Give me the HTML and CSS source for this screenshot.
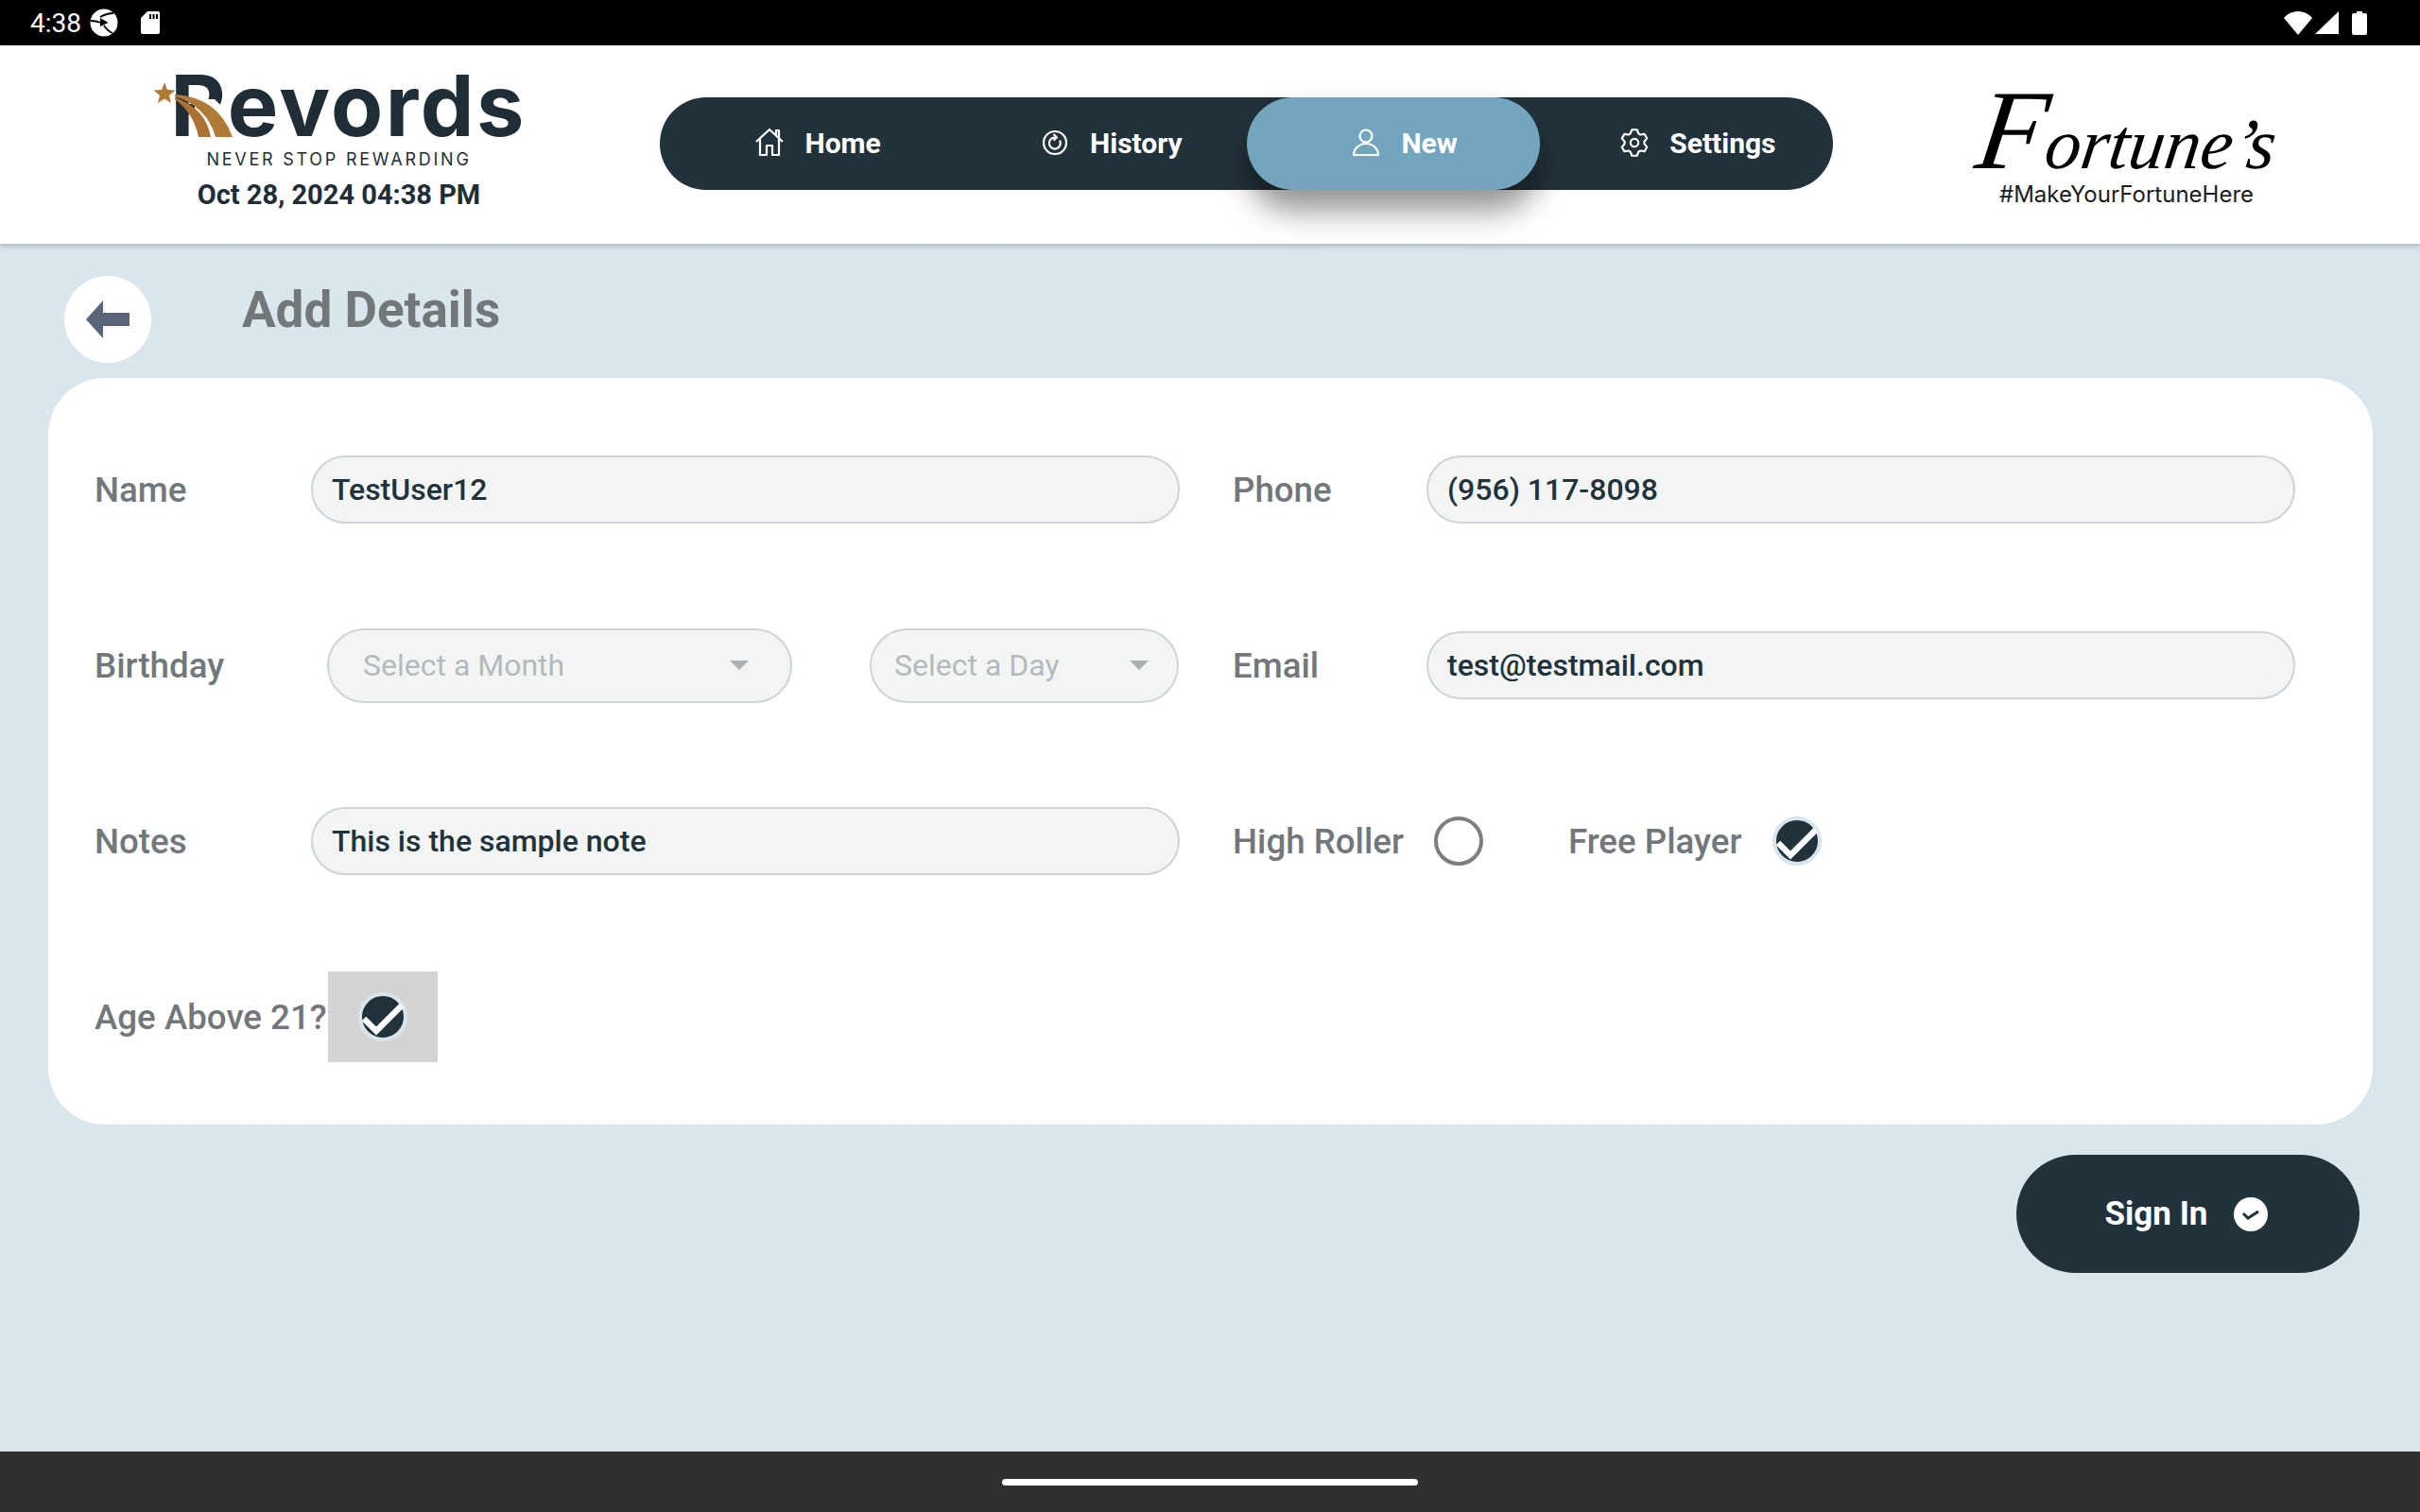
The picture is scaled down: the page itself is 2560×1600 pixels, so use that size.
FILE: index.html
```html
<!DOCTYPE html>
<html lang="en">
<head>
  <meta charset="UTF-8" />
  <meta name="viewport" content="width=device-width, initial-scale=1.0" />
  <title>Add Details</title>
  <link rel="stylesheet" href="styles.css">
</head>
<body>
  <div class="statusbar">
    <div class="status-left">
      <span class="clock">4:38</span>
      <svg class="status-sync" viewBox="0 0 30 30">
        <circle cx="15" cy="15" r="14.500" fill="#fff"/>
        <path d="M11 10 19.500 15 11 19Z" fill="#000"/>
        <path d="M11 9Q18 5 25 5M12 15Q6 13 1 13M15 18Q19 24 24 26" fill="none" stroke="#000" stroke-width="1.800"/>
      </svg>
      <svg class="status-sd" viewBox="0 0 20 24">
        <path d="M7 0H18a2 2 0 0 1 2 2V22a2 2 0 0 1-2 2H2a2 2 0 0 1-2-2V7Z" fill="#fff"/>
        <path d="M9 3h2v5H9zM12.500 3h2v5h-2zM16 3h2v5h-2z" fill="#000"/>
      </svg>
    </div>
    <div class="status-right">
      <svg class="status-wifi" viewBox="0 0 30 25"><path d="M15 25 0 7Q6 0 15 0T30 7Z" fill="#fff"/></svg>
      <svg class="status-signal" viewBox="0 0 25 24"><path d="M25 0V24H0Z" fill="#fff"/></svg>
      <svg class="status-battery" viewBox="0 0 16 25"><path d="M5 0h6v2h3a2 2 0 0 1 2 2V23a2 2 0 0 1-2 2H2a2 2 0 0 1-2-2V4a2 2 0 0 1 2-2h3Z" fill="#fff"/></svg>
    </div>
  </div>

  <header class="topbar">
    <div class="brand">
      <div class="brand-logo">
        <span class="brand-name">Revords</span>
        <svg class="brand-mark" viewBox="0 0 90 75">
          <path d="M11 12 14 20 22.500 20.500 16 26 18 34 11 29.500 4 34 6 26 -.500 20.500 8 20Z" fill="#b07a38"/>
          <path d="M43 30H64Q80 44 88 72H43Z" fill="#fff"/>
          <path d="M22 25Q68 28 83 70H65Q56 38 22 27Z" fill="#b07a38"/>
          <path d="M22 28Q55 40 60 70H47Q42 45 22 30Z" fill="#ab7233"/>
        </svg>
      </div>
      <div class="brand-tag">NEVER STOP REWARDING</div>
      <div class="brand-date">Oct 28, 2024 04:38 PM</div>
    </div>

    <nav class="nav">
      <a class="nav-item">
        <svg class="nav-icon" viewBox="0 0 30 30"><path d="M1 14 15 1 29 14M5 11V28H12V18H18V28H25V11M22 7V2H25V10" /></svg>
        Home
      </a>
      <a class="nav-item">
        <svg class="nav-icon" viewBox="0 0 30 30"><circle cx="15" cy="15" r="12"/><path d="M20 12.500A6 6 0 1 1 15 9.500M13.500 6 17 9.500 13.500 12.500"/></svg>
        History
      </a>
      <a class="nav-item active">
        <svg class="nav-icon" viewBox="0 0 30 30"><circle cx="15" cy="8" r="6.500"/><path d="M2 28A13 12 0 0 1 28 28Z"/></svg>
        New
      </a>
      <a class="nav-item">
        <svg class="nav-icon" viewBox="0 0 30 30"><circle cx="15" cy="15" r="4.200"/><path d="M10.700 5.400 12.300 1.250H17.700L19.300 5.400 21.200 6.500 25.600 5.800 28.200 10.400 25.400 13.900V16.100L28.200 19.600 25.600 24.200 21.200 23.500 19.300 24.600 17.700 28.750H12.300L10.700 24.600 8.800 23.500 4.400 24.200 1.800 19.600 4.600 16.100V13.900L1.800 10.400 4.400 5.800 8.800 6.500Z"/></svg>
        Settings
      </a>
    </nav>

    <div class="venue">
      <div class="venue-name"><span class="venue-initial">F</span>ortune’s</div>
      <div class="venue-tag">#MakeYourFortuneHere</div>
    </div>
  </header>

  <main class="page">
    <div class="page-head">
      <button class="back-btn">
        <svg class="back-icon" viewBox="0 0 46 40"><path d="M18 0V13H46V27H18V40L0 20Z"/></svg>
      </button>
      <h1 class="page-title">Add Details</h1>
    </div>

    <section class="card">
      <div class="row">
        <label class="label label-name">Name</label>
        <div class="field">TestUser12</div>
      </div>
      <div class="row">
        <label class="label label-phone">Phone</label>
        <div class="field">(956) 117-8098</div>
      </div>

      <div class="row">
        <label class="label label-birthday">Birthday</label>
        <div class="select select-month">Select a Month<span class="caret"></span></div>
        <div class="select select-day">Select a Day<span class="caret"></span></div>
      </div>
      <div class="row">
        <label class="label label-phone">Email</label>
        <div class="field">test@testmail.com</div>
      </div>

      <div class="row">
        <label class="label label-name">Notes</label>
        <div class="field">This is the sample note</div>
      </div>
      <div class="row">
        <label class="label label-roller">High Roller</label>
        <span class="radio"></span>
        <label class="label label-free">Free Player</label>
        <svg class="check" viewBox="0 0 52 52">
          <circle cx="26" cy="26" r="24" fill="#22323b" stroke="#d8e5ec" stroke-width="4"/>
          <path d="M6 28 19 41 46 14" fill="none" stroke="#fff" stroke-width="6.500"/>
        </svg>
      </div>

      <div class="row">
        <label class="label label-age">Age Above 21?</label>
        <div class="check-focus">
          <svg class="check" viewBox="0 0 52 52">
            <circle cx="26" cy="26" r="24" fill="#22323b" stroke="#d8e5ec" stroke-width="4"/>
            <path d="M6 28 19 41 46 14" fill="none" stroke="#fff" stroke-width="6.500"/>
          </svg>
        </div>
      </div>
    </section>

    <div class="actions">
      <button class="signin-btn">
        Sign In
        <svg class="signin-icon" viewBox="0 0 36 36">
          <circle cx="18" cy="18" r="18" fill="#fff"/>
          <path d="M10 17 15 22 26 15" fill="none" stroke="#22323b" stroke-width="3"/>
        </svg>
      </button>
    </div>
  </main>

  <footer class="navbar">
    <div class="home-bar"></div>
  </footer>
</body>
</html>
```

FILE: styles.css
```css
html, body {
  margin: 0;
  padding: 0;
  width: 100%;
  height: 100%;
  overflow: hidden;
  font-family: "Roboto", "Liberation Sans", sans-serif;
  background-color: #d9e6ec;
}

body {
  display: flex;
  flex-direction: column;
}

/* android status bar */
.statusbar {
  flex: 0 0 48px;
  display: flex;
  justify-content: space-between;
  align-items: center;
  padding: 0 56px 0 32px;
  background-color: #000;
  color: #fff;
}

.status-left, .status-right {
  display: flex;
  align-items: center;
}

.clock {
  font-size: 28px;
  width: 63px;
}

.status-sync {
  width: 30px;
  height: 30px;
}

.status-sd {
  width: 20px;
  height: 24px;
  margin-left: 24px;
}

.status-wifi {
  width: 30px;
  height: 25px;
}

.status-signal {
  width: 25px;
  height: 24px;
  margin-left: 3px;
}

.status-battery {
  width: 16px;
  height: 25px;
  margin-left: 14px;
}

/* header */
.topbar {
  flex: 0 0 210px;
  position: relative;
  z-index: 2;
  display: flex;
  align-items: flex-start;
  background-color: #fff;
  box-shadow: 0 2px 6px rgba(60, 80, 95, 0.35);
}

.brand {
  flex: 0 0 698px;
  display: flex;
  flex-direction: column;
  align-items: center;
  box-sizing: border-box;
  padding: 16px 0 0 19px;
  color: #1f2d36;
}

.brand-logo {
  position: relative;
  height: 95px;
  margin-left: 20px;
}

.brand-name {
  display: block;
  font-family: "Inter", "Liberation Sans", sans-serif;
  font-weight: 700;
  font-size: 90px;
  line-height: 95px;
  letter-spacing: 2.5px;
}

.brand-mark {
  position: absolute;
  left: -17px;
  top: 11px;
  width: 90px;
  height: 75px;
}

.brand-tag {
  font-family: "Inter", "Liberation Sans", sans-serif;
  font-size: 18px;
  line-height: 20px;
  letter-spacing: 2.75px;
}

.brand-date {
  font-size: 29px;
  font-weight: 700;
  line-height: 36px;
  margin-top: 9px;
}

.nav {
  margin-top: 55px;
  flex: 0 0 1241px;
  height: 98px;
  display: flex;
  border-radius: 49px;
  background-color: #22323b;
}

.nav-item {
  flex: 1;
  display: flex;
  align-items: center;
  justify-content: center;
  gap: 22px;
  padding: 0 1px 2px 26px;
  box-sizing: border-box;
  border-radius: 49px;
  color: #fff;
  font-size: 30px;
  font-weight: 700;
}

.nav-item.active {
  background-color: #73a5bf;
  box-shadow: 0 22px 32px rgba(0, 0, 0, 0.42);
}

.nav-icon {
  width: 30px;
  height: 30px;
  fill: none;
  stroke: #fff;
  stroke-width: 2.2;
  stroke-linejoin: round;
}

.venue {
  flex: 1;
  display: flex;
  flex-direction: column;
  align-items: center;
  padding-top: 64px;
  color: #000;
}

.venue-name {
  font-family: "Liberation Serif", serif;
  font-style: italic;
  font-size: 76px;
  line-height: 80px;
  white-space: nowrap;
  transform: skewX(-8deg);
}

.venue-initial {
  font-size: 120px;
  line-height: 0;
}

.venue-tag {
  font-family: "Inter", "Liberation Sans", sans-serif;
  font-size: 24px;
  line-height: 28px;
  color: #1c1c1c;
}

/* page */
.page {
  flex: 1;
  padding: 34px 50px 0 51px;
}

.page-head {
  display: flex;
  align-items: flex-start;
  height: 108px;
  padding-left: 17px;
}

.back-btn {
  width: 92px;
  height: 92px;
  border: none;
  border-radius: 50%;
  background-color: #fff;
  display: flex;
  align-items: center;
  justify-content: center;
  padding: 0;
}

.back-icon {
  width: 46px;
  height: 40px;
  fill: #5a6578;
}

.page-title {
  margin: 0 0 0 96px;
  font-size: 53px;
  font-weight: 700;
  line-height: 72px;
  color: #72777a;
}

.card {
  display: grid;
  grid-template-columns: 1148px 1124px;
  grid-auto-rows: 72px;
  column-gap: 56px;
  row-gap: 114px;
  padding: 82px 80px 78px 49px;
  border-radius: 60px;
  background-color: #fff;
}

.row {
  display: flex;
  align-items: center;
}

.label {
  font-size: 36.7px;
  font-weight: 500;
  color: #72777a;
  white-space: nowrap;
}

.label-name {
  flex: 0 0 229px;
}

.label-phone {
  flex: 0 0 205px;
}

.label-birthday {
  flex: 0 0 246px;
}

.label-roller {
  flex: 0 0 213px;
}

.label-free {
  flex: 0 0 216px;
  margin-left: 90px;
}

.label-age {
  flex: 0 0 247px;
}

.field {
  flex: 1;
  height: 72px;
  display: flex;
  align-items: center;
  padding-left: 20px;
  box-sizing: border-box;
  border: 2px solid #cdd3d8;
  border-radius: 36px;
  background-color: #f3f5f5;
  font-size: 32px;
  font-weight: 500;
  color: #22323b;
}

.select {
  height: 79px;
  flex: none;
  display: flex;
  align-items: center;
  justify-content: space-between;
  box-sizing: border-box;
  border: 2px solid #cdd3d8;
  border-radius: 40px;
  background-color: #f3f5f5;
  font-size: 32px;
  color: #b4babc;
}

.select-month {
  width: 492px;
  padding: 0 44px 0 36px;
}

.select-day {
  width: 327px;
  margin-left: 82px;
  padding: 0 30px 0 24px;
}

.caret {
  width: 0;
  height: 0;
  border-left: 10px solid transparent;
  border-right: 10px solid transparent;
  border-top: 10px solid #aab0b3;
}

.radio {
  width: 52px;
  height: 52px;
  box-sizing: border-box;
  border: 4px solid #7c7f80;
  border-radius: 50%;
}

.check {
  width: 52px;
  height: 52px;
  flex: none;
}

.check-focus {
  width: 116px;
  height: 96px;
  flex: none;
  display: flex;
  align-items: center;
  justify-content: center;
  background-color: #d4d4d4;
}

.actions {
  display: flex;
  justify-content: flex-end;
  padding: 32px 14px 0 0;
}

.signin-btn {
  width: 363px;
  height: 125px;
  border: none;
  border-radius: 63px;
  padding: 0 3px 0 0;
  display: flex;
  align-items: center;
  justify-content: center;
  gap: 28px;
  background-color: #22323b;
  color: #fff;
  font-family: inherit;
  font-size: 35px;
  font-weight: 700;
}

.signin-icon {
  width: 36px;
  height: 36px;
}

/* android nav bar */
.navbar {
  flex: 0 0 64px;
  display: flex;
  justify-content: center;
  align-items: center;
  background-color: #303030;
}

.home-bar {
  width: 440px;
  height: 7px;
  border-radius: 4px;
  background-color: #fff;
}
```
